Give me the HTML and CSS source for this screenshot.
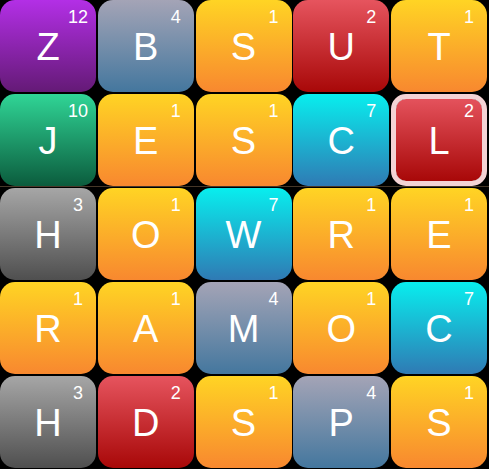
FILE: index.html
```html
<!DOCTYPE html>
<html>
<head>
<meta charset="utf-8">
<link rel="stylesheet" href="styles.css">
</head>
<body>
<div class="board">
  <div class="tile purple"><span class="letter">Z</span><span class="pts">12</span></div>
  <div class="tile steel"><span class="letter">B</span><span class="pts">4</span></div>
  <div class="tile orange"><span class="letter">S</span><span class="pts">1</span></div>
  <div class="tile red"><span class="letter">U</span><span class="pts">2</span></div>
  <div class="tile orange"><span class="letter">T</span><span class="pts">1</span></div>

  <div class="tile green"><span class="letter">J</span><span class="pts">10</span></div>
  <div class="tile orange"><span class="letter">E</span><span class="pts">1</span></div>
  <div class="tile orange"><span class="letter">S</span><span class="pts">1</span></div>
  <div class="tile cyan"><span class="letter">C</span><span class="pts">7</span></div>
  <div class="tile red selected"><span class="letter">L</span><span class="pts">2</span></div>

  <div class="tile gray"><span class="letter">H</span><span class="pts">3</span></div>
  <div class="tile orange"><span class="letter">O</span><span class="pts">1</span></div>
  <div class="tile cyan"><span class="letter">W</span><span class="pts">7</span></div>
  <div class="tile orange"><span class="letter">R</span><span class="pts">1</span></div>
  <div class="tile orange"><span class="letter">E</span><span class="pts">1</span></div>

  <div class="tile orange"><span class="letter">R</span><span class="pts">1</span></div>
  <div class="tile orange"><span class="letter">A</span><span class="pts">1</span></div>
  <div class="tile steel"><span class="letter">M</span><span class="pts">4</span></div>
  <div class="tile orange"><span class="letter">O</span><span class="pts">1</span></div>
  <div class="tile cyan"><span class="letter">C</span><span class="pts">7</span></div>

  <div class="tile gray"><span class="letter">H</span><span class="pts">3</span></div>
  <div class="tile red"><span class="letter">D</span><span class="pts">2</span></div>
  <div class="tile orange"><span class="letter">S</span><span class="pts">1</span></div>
  <div class="tile steel"><span class="letter">P</span><span class="pts">4</span></div>
  <div class="tile orange"><span class="letter">S</span><span class="pts">1</span></div>
  <div class="rule"></div>
</div>
</body>
</html>
```

FILE: styles.css
```css
html, body {
  margin: 0;
  padding: 0;
  background: #000;
}
body {
  width: 489px;
  height: 469px;
  overflow: hidden;
  font-family: "Liberation Sans", Arial, sans-serif;
}
.board {
  position: relative;
  display: grid;
  grid-template-columns: repeat(5, 96px);
  grid-template-rows: repeat(5, 92px);
  column-gap: 1.75px;
  row-gap: 2px;
}
.tile {
  position: relative;
  box-sizing: border-box;
  border-radius: 15px;
  display: flex;
  align-items: center;
  justify-content: center;
  color: #fff;
}
.letter {
  font-size: 38px;
  line-height: 1;
  margin-top: 2px;
}
.pts {
  position: absolute;
  top: 7.5px;
  right: 6px;
  width: 24px;
  text-align: center;
  font-size: 18px;
  line-height: 1;
}
.purple { background: linear-gradient(#b32fe6, #641a76); }
.steel  { background: linear-gradient(#a4a4b6, #44779e); }
.orange { background: linear-gradient(#ffd424, #f8882f); }
.red    { background: linear-gradient(#e6545e, #a80808); }
.green  { background: linear-gradient(#30d596, #0b5c3d); }
.cyan   { background: linear-gradient(#08eeee, #2f7ab4); }
.gray   { background: linear-gradient(#a6a6a6, #4f4f4f); }
.selected {
  border: 5px solid #f4d3d5;
  border-radius: 15px;
  background-color: #f4d3d5;
  background-image: linear-gradient(#e4525c, #a80808);
  background-clip: padding-box;
  background-origin: padding-box;
}
.selected .pts { top: 2.5px; right: 1px; }
.rule {
  position: absolute;
  left: 0;
  right: 0;
  top: 186px;
  height: 1px;
  background: rgba(140, 110, 80, 0.5);
}
```
